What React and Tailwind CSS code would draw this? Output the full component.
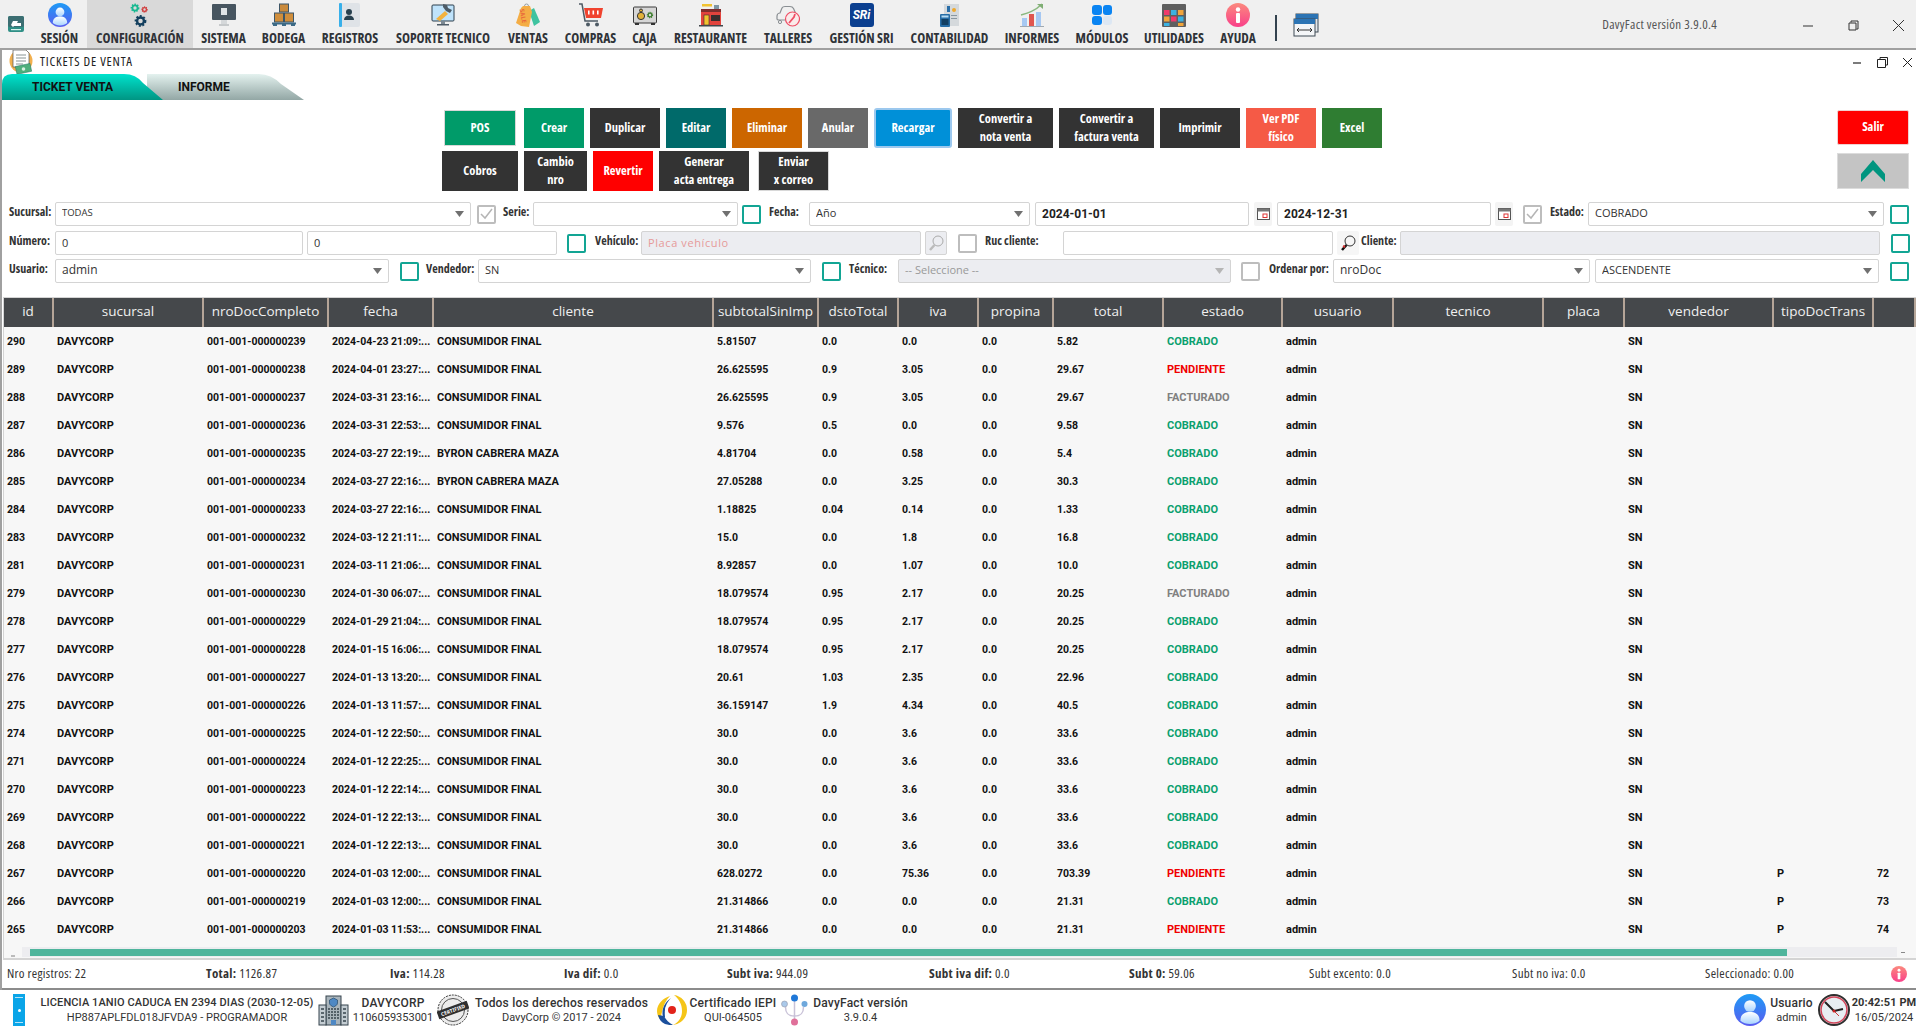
const NARROW = "font-['Open_Sans',sans-serif] [font-stretch:75%]";
const ROBOTO = "font-['Roboto',sans-serif]";

function Gear({ cx, cy, r, color }) {
  return (
    <g>
      <circle cx={cx} cy={cy} r={r} fill="none" stroke={color} strokeWidth={r * 0.45} strokeDasharray={`${r * 0.4} ${r * 0.34}`} />
      <circle cx={cx} cy={cy} r={r * 0.72} fill="none" stroke={color} strokeWidth={r * 0.5} />
    </g>
  );
}

function UserIcon({ id, size = 24 }) {
  return (
    <svg width={size} height={size} viewBox="0 0 24 24">
      <defs>
        <linearGradient id={id} x1="0" y1="0" x2="0" y2="1">
          <stop offset="0" stopColor="#1e9bf5" />
          <stop offset="1" stopColor="#5a5cf0" />
        </linearGradient>
        <linearGradient id={id + 'b'} x1="0" y1="0" x2="0" y2="1">
          <stop offset="0" stopColor="#ffffff" />
          <stop offset="1" stopColor="#a9d4ff" />
        </linearGradient>
      </defs>
      <circle cx="12" cy="12" r="12" fill={`url(#${id})`} />
      <circle cx="12" cy="9" r="4.4" fill={`url(#${id}b)`} />
      <path d="M4.8 20c0-4.600 3-6.500 7.200-6.500s7.200 1.900 7.200 6.500c-2 1.600-4.400 2.500-7.200 2.500s-5.200-.9-7.200-2.500z" fill={`url(#${id}b)`} />
    </svg>
  );
}

function InfoIcon({ id, size = 24 }) {
  return (
    <svg width={size} height={size} viewBox="0 0 24 24">
      <defs>
        <linearGradient id={id} x1="0" y1="0" x2="0" y2="1">
          <stop offset="0" stopColor="#fb8a7e" />
          <stop offset="1" stopColor="#f9408a" />
        </linearGradient>
      </defs>
      <circle cx="12" cy="12" r="12" fill={`url(#${id})`} />
      <circle cx="12" cy="6.500" r="2.200" fill="#fff" />
      <rect x="10" y="10" width="4" height="10" rx="1" fill="#fff" />
    </svg>
  );
}

const menuIcons = {
  sesion: <UserIcon id="u1" />,
  config: (
    <svg width="24" height="24" viewBox="0 0 24 24">
      <Gear cx={7} cy={5} r={3.6} color="#17b890" />
      <Gear cx={16.500} cy={6.500} r={2.600} color="#d13a3a" />
      <Gear cx={12.500} cy={18} r={4.800} color="#14405f" />
    </svg>
  ),
  sistema: (
    <svg width="24" height="24" viewBox="0 0 24 24">
      <rect x="0" y="1" width="24" height="16" rx="1" fill="#475560" />
      <rect x="9" y="5" width="6" height="7" fill="#dfe3e6" />
      <rect x="9" y="17" width="6" height="4" fill="#d5d8da" />
      <rect x="7" y="21" width="10" height="2" fill="#c6c9cb" />
    </svg>
  ),
  bodega: (
    <svg width="24" height="24" viewBox="0 0 24 24">
      <rect x="7.500" y="1" width="9" height="8" fill="#c98a3c" stroke="#3d5566" />
      <rect x="2.500" y="10" width="9" height="9" fill="#d08e3c" stroke="#3d5566" />
      <rect x="12.500" y="10" width="9" height="9" fill="#d08e3c" stroke="#3d5566" />
      <rect x="0" y="19.500" width="24" height="2" fill="#3c6a86" />
      <rect x="1" y="21" width="4" height="2" fill="#3c6a86" />
      <rect x="10" y="21" width="4" height="2" fill="#3c6a86" />
      <rect x="19" y="21" width="4" height="2" fill="#3c6a86" />
    </svg>
  ),
  registros: (
    <svg width="24" height="24" viewBox="0 0 24 24">
      <rect x="2" y="0" width="20" height="24" rx="2" fill="#dfe3e7" />
      <rect x="1" y="0" width="3" height="24" rx="1" fill="#38b0ea" />
      <circle cx="11" cy="9" r="3" fill="#27404f" />
      <path d="M6 17c0-3 2-4.500 5-4.500s5 1.500 5 4.500z" fill="#27404f" />
    </svg>
  ),
  soporte: (
    <svg width="24" height="24" viewBox="0 0 24 24">
      <rect x="1" y="2" width="22" height="16" rx="1" fill="#bfe3fb" stroke="#2d3e4c" />
      <rect x="10" y="18" width="4" height="3" fill="#7c8993" />
      <rect x="6" y="21" width="12" height="1.500" fill="#4f5d68" />
      <path d="M5 16l9-8 3 3-8 7z" fill="#f2b23e" />
      <path d="M12 1l4 1 1 3 4 2-2 3-4-2-3-4z" fill="#4d5b66" />
    </svg>
  ),
  ventas: (
    <svg width="24" height="24" viewBox="0 0 24 24">
      <circle cx="10.500" cy="3" r="2" fill="none" stroke="#9aa0a5" />
      <path d="M13 8l5-3 6 14-6 4z" fill="#3fc3a0" />
      <path d="M7 3h7l2 6-3 15-8-1-5-3 5-15z" fill="#f4ad45" />
      <text x="7" y="15" fontSize="6" fontWeight="700" fill="#e9683c" transform="rotate(80 7 13)" textAnchor="middle">SALE</text>
    </svg>
  ),
  compras: (
    <svg width="24" height="24" viewBox="0 0 24 24">
      <path d="M0 1h3l3 17h13" fill="none" stroke="#4d5a64" strokeWidth="1.500" />
      <path d="M5 5h19l-2 10H7z" fill="#f0432f" />
      <rect x="9" y="7.500" width="1.600" height="4" fill="#fff" />
      <rect x="13.500" y="7.500" width="1.600" height="4" fill="#fff" />
      <rect x="18" y="7.500" width="1.600" height="4" fill="#fff" />
      <circle cx="9" cy="21.500" r="2" fill="#4d5a64" />
      <circle cx="18" cy="21.500" r="2" fill="#4d5a64" />
    </svg>
  ),
  caja: (
    <svg width="24" height="24" viewBox="0 0 24 24">
      <rect x="0.500" y="4" width="23" height="16" rx="1" fill="#d6d6d6" stroke="#3c3c3c" />
      <rect x="2" y="20" width="4" height="2" fill="#333" />
      <rect x="18" y="20" width="4" height="2" fill="#333" />
      <circle cx="8" cy="13" r="3.600" fill="#e3b23a" stroke="#333" />
      <circle cx="8" cy="7.500" r="1.500" fill="#e3b23a" stroke="#333" />
      <Gear cx={17} cy={12} r={2.600} color="#3e7e2e" />
    </svg>
  ),
  restaurante: (
    <svg width="24" height="24" viewBox="0 0 24 24">
      <rect x="2" y="9" width="20" height="13" fill="#e2433d" />
      <rect x="2" y="6" width="20" height="3" fill="#7e2e2e" />
      <rect x="3" y="1" width="10" height="2.500" fill="#f2c230" />
      <rect x="15" y="2" width="5" height="4" fill="#7f96a3" />
      <rect x="5" y="12" width="5" height="10" fill="#f2c230" stroke="#333" strokeWidth=".6" />
      <rect x="12" y="12" width="9" height="6" fill="#3a2e2e" />
      <rect x="0" y="22" width="24" height="1.500" fill="#40474c" />
    </svg>
  ),
  talleres: (
    <svg width="24" height="24" viewBox="0 0 24 24">
      <path d="M1 13c0-2 2-3 3-3l2-5c.500-1 1-1.500 3-1.500h5c2 0 3 1 3.500 2l2 4.500" fill="none" stroke="#8a8f93" strokeWidth="1.200" />
      <path d="M1 13v3c0 1 1 1 2 1h8" fill="none" stroke="#8a8f93" strokeWidth="1.200" />
      <circle cx="4" cy="19" r="1.600" fill="none" stroke="#8a8f93" />
      <circle cx="16.500" cy="16" r="7" fill="#fbeaea" stroke="#ef4f66" strokeWidth="1.200" />
      <path d="M13 20l5-6 1-3" fill="none" stroke="#ef4f66" strokeWidth="1.800" />
    </svg>
  ),
  sri: (
    <div className={`w-[24px] h-[24px] rounded-[3px] bg-[#0b3f8f] flex items-center justify-center text-white text-[12px] font-bold italic ${ROBOTO}`}>
      SRi
    </div>
  ),
  contabilidad: (
    <svg width="24" height="24" viewBox="0 0 24 24">
      <rect x="6" y="1" width="15" height="22" fill="#d5d9dc" />
      <rect x="9" y="3" width="3" height="6" fill="#2a6ea8" />
      <circle cx="16" cy="7" r="2" fill="#efa92e" />
      <rect x="13" y="12" width="6" height="1" fill="#8a97a0" />
      <rect x="13" y="15" width="6" height="1" fill="#8a97a0" />
      <rect x="2" y="11" width="10" height="13" rx="1" fill="#276da6" />
      <rect x="3.500" y="12.500" width="7" height="2" fill="#b7dcf4" />
      <rect x="3.500" y="16" width="7" height="6" fill="#123f63" />
    </svg>
  ),
  informes: (
    <svg width="24" height="24" viewBox="0 0 24 24">
      <path d="M1 12C8 10 15 8 22 1" fill="none" stroke="#8ab87f" strokeWidth="1.500" />
      <path d="M17 1h6v5z" fill="#7fae74" />
      <rect x="2" y="15" width="5" height="8" fill="#a6c8f2" />
      <rect x="9" y="11" width="5" height="12" fill="#e0564f" />
      <rect x="16" y="9" width="5" height="14" fill="#a6c8f2" />
      <rect x="0" y="23" width="24" height="1" fill="#9fa9b2" />
    </svg>
  ),
  modulos: (
    <div className="w-[20px] h-[20px] mt-[2px] grid grid-cols-2 gap-[1px]">
      <div className="rounded-[3px] bg-[#0a84f2]" />
      <div className="rounded-[3px] bg-[#0a84f2]" />
      <div className="rounded-[3px] bg-[#0a84f2]" />
      <div className="rounded-[3px] bg-[#dce7f3]" />
    </div>
  ),
  utilidades: (
    <svg width="24" height="24" viewBox="0 0 24 24">
      <rect x="0" y="1" width="24" height="23" rx="1" fill="#5f5f5f" />
      <rect x="2" y="7" width="5.500" height="5" fill="#ef3b6b" />
      <rect x="9" y="7" width="5.500" height="5" fill="#3cb2e0" />
      <rect x="16" y="7" width="5.500" height="5" fill="#f2a53a" />
      <rect x="2" y="13.500" width="5.500" height="5" fill="#f2a53a" />
      <rect x="9" y="13.500" width="5.500" height="5" fill="#ef3b6b" />
      <rect x="16" y="13.500" width="5.500" height="5" fill="#3cb2e0" />
      <rect x="2" y="20" width="5.500" height="3" fill="#3cb2e0" />
      <rect x="16" y="20" width="5.500" height="3" fill="#f2a53a" />
    </svg>
  ),
  ayuda: <InfoIcon id="i1" />,
};

const menu = [
  { k: 'sesion', t: 'SESIÓN', w: 'w-[55px]' },
  { k: 'config', t: 'CONFIGURACIÓN', w: 'w-[106px] bg-[#d9d9d9]' },
  { k: 'sistema', t: 'SISTEMA', w: 'w-[61px]' },
  { k: 'bodega', t: 'BODEGA', w: 'w-[59px]' },
  { k: 'registros', t: 'REGISTROS', w: 'w-[74px]' },
  { k: 'soporte', t: 'SOPORTE TECNICO', w: 'w-[112px]' },
  { k: 'ventas', t: 'VENTAS', w: 'w-[58px]' },
  { k: 'compras', t: 'COMPRAS', w: 'w-[67px]' },
  { k: 'caja', t: 'CAJA', w: 'w-[41px]' },
  { k: 'restaurante', t: 'RESTAURANTE', w: 'w-[91px]' },
  { k: 'talleres', t: 'TALLERES', w: 'w-[64px]' },
  { k: 'sri', t: 'GESTIÓN SRI', w: 'w-[83px]' },
  { k: 'contabilidad', t: 'CONTABILIDAD', w: 'w-[93px]' },
  { k: 'informes', t: 'INFORMES', w: 'w-[72px]' },
  { k: 'modulos', t: 'MÓDULOS', w: 'w-[68px]' },
  { k: 'utilidades', t: 'UTILIDADES', w: 'w-[76px]' },
  { k: 'ayuda', t: 'AYUDA', w: 'w-[52px]' },
];

function TopBar() {
  return (
    <div className="h-[50px] bg-[#f0f0f0] border-b-[2px] border-[#a0a0a0] flex items-start">
      <div className="w-[32px] pl-[8px] pt-[16px]">
        <svg width="16" height="16" viewBox="0 0 16 16">
          <rect width="16" height="16" rx="2" fill="#2f8f86" />
          <rect width="16" height="11" rx="2" fill="#3c6e72" />
          <path d="M3 9l2-4h5l-1 2h4v3H6l-1 1z" fill="#fff" />
          <rect x="3" y="13" width="10" height="1.200" fill="#d8f5ee" />
        </svg>
      </div>
      {menu.map((m) => (
        <div key={m.k} className={`${m.w} h-[48px] pt-[3px] flex flex-col items-center`}>
          <div className="h-[25px] flex items-start justify-center">{menuIcons[m.k]}</div>
          <span className={`mt-[3px] text-[13.500px] leading-[15px] font-bold text-[#2f3338] whitespace-nowrap ${NARROW}`}>{m.t}</span>
        </div>
      ))}
      <div className="ml-[11px] mt-[15px] w-[2px] h-[26px] bg-[#33424f]" />
      <div className="ml-[16px] mt-[13px]">
        <svg width="26" height="24" viewBox="0 0 26 24">
          <rect x="3" y="1" width="22" height="18" fill="#e4e8ec" stroke="#3e4a54" />
          <rect x="3" y="1" width="22" height="5" fill="#2c74b4" />
          <rect x="1" y="6" width="21" height="17" fill="#f4f6f8" stroke="#3e4a54" />
          <rect x="1" y="6" width="21" height="5" fill="#2c74b4" />
          <path d="M4 17h15M4 17l2-2M4 17l2 2M19 17l-2-2M19 17l-2 2" stroke="#333" fill="none" />
        </svg>
      </div>
      <span className={`ml-auto mt-[16px] mr-[86px] text-[13px] tracking-[0.3px] leading-[16px] text-[#555] ${NARROW}`}>DavyFact versión 3.9.0.4</span>
      <div className="flex items-center mt-[20px] mr-[12px] gap-[34px]">
        <svg width="11" height="10" viewBox="0 0 11 10"><path d="M0 5h10" stroke="#333" /></svg>
        <svg width="11" height="11" viewBox="0 0 11 11"><path d="M3 2.500V1h7v8H8.500M1 3h7v7H1z" stroke="#333" fill="none" /></svg>
        <svg width="11" height="11" viewBox="0 0 11 11"><path d="M0 0l11 11M11 0L0 11" stroke="#333" /></svg>
      </div>
    </div>
  );
}

function TitleRow() {
  return (
    <div className="h-[24px] flex items-center relative">
      <div className="ml-[7px] w-[24px]">
        <svg width="24" height="24" viewBox="0 0 24 24">
          <circle cx="12" cy="11" r="11.500" fill="#f2b04e" />
          <path d="M4 0h13l3 3v14H4z" fill="#fff" stroke="#555" strokeWidth=".7" />
          <path d="M7 5h10M7 8h10M7 11h10M7 14h7" stroke="#566" strokeWidth=".7" />
          <rect x="7" y="15" width="15" height="8" transform="rotate(-12 14 19)" fill="#4faf7b" stroke="#276" strokeWidth=".5" />
          <circle cx="14.500" cy="19" r="1.800" fill="#d6f0e0" />
        </svg>
      </div>
      <span className={`ml-[7px] text-[13px] tracking-[0.8px] text-[#222] ${NARROW}`}>TICKETS DE VENTA</span>
      <div className="ml-auto mr-[4px] flex items-center gap-[15px]">
        <svg width="9" height="9" viewBox="0 0 9 9"><path d="M0 5h8" stroke="#222" strokeWidth="1.200" /></svg>
        <svg width="11" height="11" viewBox="0 0 11 11"><path d="M3 2.500V.5h7.500v7.500H8.500M.5 2.500h8v8h-8z" stroke="#222" fill="none" /></svg>
        <svg width="9" height="9" viewBox="0 0 9 9"><path d="M0 0l9 9M9 0L0 9" stroke="#222" /></svg>
      </div>
    </div>
  );
}

function Tabs() {
  return (
    <div className={`h-[26px] relative text-[12px] font-bold text-[#111] ${ROBOTO}`}>
      <div className="absolute left-[145px] top-0 w-[160px] h-[26px] bg-gradient-to-b from-[#e4f2ef] to-[#93a7a5] [clip-path:path('M0,26_L0,0_L112,0_Q124,0_134,10_L157,26_Z')] flex items-center pl-[31px]">
        INFORME
      </div>
      <div className="absolute left-[0px] top-0 w-[162px] h-[26px] bg-gradient-to-b from-[#00e3cd] to-[#009583] [clip-path:path('M0,26_L0,10_Q0,0_10,0_L122,0_Q134,0_141,9_L161,26_Z')] flex items-center pl-[30px]">
        TICKET VENTA
      </div>
    </div>
  );
}

const row1 = [
  { t: ['Crear'], c: 'w-[60px] ml-[2px] bg-[#009b69]' },
  { t: ['Duplicar'], c: 'w-[70px] bg-[#333333]' },
  { t: ['Editar'], c: 'w-[60px] bg-[#006a6a]' },
  { t: ['Eliminar'], c: 'w-[70px] bg-[#cc6600]' },
  { t: ['Anular'], c: 'w-[60px] bg-[#696969]' },
  { t: ['Recargar'], c: 'w-[78px] bg-[#0090d8] border-[2px] border-[#9cc8ee] rounded-[3px]' },
  { t: ['Convertir a', 'nota venta'], c: 'w-[95px] bg-[#333333]' },
  { t: ['Convertir a', 'factura venta'], c: 'w-[95px] bg-[#333333]' },
  { t: ['Imprimir'], c: 'w-[80px] bg-[#333333]' },
  { t: ['Ver PDF', 'físico'], c: 'w-[70px] bg-[#f55a46]' },
  { t: ['Excel'], c: 'w-[60px] bg-[#2f7d32]' },
];
const row2 = [
  { t: ['Cobros'], c: 'w-[76px] bg-[#333333]' },
  { t: ['Cambio', 'nro'], c: 'w-[63px] bg-[#333333]' },
  { t: ['Revertir'], c: 'w-[60px] bg-[#ff0000]' },
  { t: ['Generar', 'acta entrega'], c: 'w-[90px] bg-[#333333]' },
  { t: ['Enviar', 'x correo'], c: 'w-[71px] ml-[3px] bg-[#333333] border border-[#d8d8d8]' },
];

function Btn({ t, c }) {
  return (
    <div className={`${c} h-[40px] shrink-0 flex flex-col items-center justify-center text-white text-[12.500px] leading-[18px] font-bold ${NARROW}`}>
      {t.map((x) => <span key={x}>{x}</span>)}
    </div>
  );
}

function Toolbar() {
  return (
    <div className="h-[102px] pt-[8px] flex">
      <div className="ml-[440px] flex flex-col gap-[3px]">
        <div className="flex gap-[6px] items-start h-[40px]">
          <div className={`w-[72px] ml-[2px] mt-[2px] h-[36px] bg-[#009b69] border border-[#d8d8d8] flex items-center justify-center text-white text-[12.500px] font-bold ${NARROW}`}>POS</div>
          {row1.map((b) => <Btn key={b.t[0] + b.t[1]} t={b.t} c={b.c} />)}
        </div>
        <div className="flex gap-[6px]">
          {row2.map((b) => <Btn key={b.t[0]} t={b.t} c={b.c} />)}
        </div>
      </div>
      <div className="ml-[455px] mt-[2px] flex flex-col gap-[8px]">
        <div className={`w-[72px] h-[35px] bg-[#ff0000] border border-[#f0d0d0] rounded-[2px] flex items-center justify-center text-white text-[12.500px] font-bold ${NARROW}`}>Salir</div>
        <div className="w-[72px] h-[36px] bg-[#c4c4c4] border border-[#dcdcdc] flex items-center justify-center">
          <svg width="24" height="22" viewBox="0 0 24 22"><path d="M12 0l12 14v8L12 10 0 22v-8z" fill="#00957f" /></svg>
        </div>
      </div>
    </div>
  );
}

function Label({ c, children }) {
  return <span className={`${c} self-start pt-[2px] shrink-0 text-[12px] leading-[16px] font-bold text-[#333] whitespace-nowrap ${NARROW}`}>{children}</span>;
}

function Select({ c, children, text = 'text-[11px] text-[#333]', disabled }) {
  return (
    <div className={`${c} h-[24px] shrink-0 border border-[#d4d4d4] rounded-[2px] flex items-center pl-[6px] pr-[6px] ${disabled ? 'bg-[#ecedf1]' : 'bg-white'} font-['Open_Sans',sans-serif] ${text}`}>
      <span className="flex-1 whitespace-nowrap overflow-hidden pb-[2px]">{children}</span>
      <svg width="9" height="6" viewBox="0 0 9 6"><path d="M0 0h9L4.500 6z" fill={disabled ? '#b5b5b5' : '#707070'} /></svg>
    </div>
  );
}

function Input({ c, children, text = 'text-[11px] text-[#333]', disabled }) {
  return (
    <div className={`${c} h-[24px] shrink-0 border border-[#d4d4d4] rounded-[2px] flex items-center pl-[6px] ${disabled ? 'bg-[#ecedf1]' : 'bg-white'} font-['Open_Sans',sans-serif] ${text}`}>
      {children}
    </div>
  );
}

function Check({ c, teal, on }) {
  return (
    <div className={`${c} w-[19px] h-[19px] shrink-0 rounded-[2px] border-[2px] flex items-center justify-center ${teal ? 'border-[#12a594]' : 'border-[#bdbdbd]'} bg-white`}>
      {on && <svg width="13" height="12" viewBox="0 0 13 12"><path d="M1 6l4 4 7-9" stroke="#b5b5b5" strokeWidth="1.500" fill="none" /></svg>}
    </div>
  );
}

function CalBtn({ c }) {
  return (
    <div className={`${c} w-[18px] h-[24px] shrink-0 bg-[#f4f4f4] rounded-[2px] flex items-center justify-center`}>
      <svg width="13" height="12" viewBox="0 0 13 12">
        <rect x=".5" y=".5" width="12" height="11" fill="#fff" stroke="#555" />
        <rect x=".5" y=".5" width="12" height="3" fill="#777" />
        <rect x="6" y="6" width="4" height="3.500" fill="none" stroke="#d33" />
      </svg>
    </div>
  );
}

function SearchBtn({ c, red }) {
  return (
    <div className={`${c} w-[22px] h-[24px] shrink-0 rounded-[2px] flex items-center justify-center ${red ? 'bg-[#f6f6f6]' : 'bg-[#ecedf1] border border-[#d4d4d4]'}`}>
      <svg width="16" height="18" viewBox="0 0 16 18">
        <circle cx="10" cy="7" r="5" fill="none" stroke={red ? '#333' : '#aaa'} />
        <path d="M6.500 11L2 16" stroke={red ? '#111' : '#bbb'} strokeWidth="2.500" />
        {red && <path d="M5 13l-2-1" stroke="#d33" strokeWidth="2" />}
      </svg>
    </div>
  );
}

const dateText = `text-[12px] font-bold text-[#222] ${ROBOTO}`;

function Filters() {
  return (
    <div className="pl-[7px] flex flex-col gap-[5px]">
      <div className="flex items-center h-[24px]">
        <Label c="w-[46px]">Sucursal:</Label>
        <Select c="w-[416px]" text="text-[9.500px] text-[#333]">TODAS</Select>
        <Check c="ml-[6px]" on />
        <Label c="ml-[7px] w-[30px]">Serie:</Label>
        <Select c="w-[205px]" />
        <Check c="ml-[4px]" teal />
        <Label c="ml-[8px] w-[40px]">Fecha:</Label>
        <Select c="w-[221px]">Año</Select>
        <Input c="ml-[5px] w-[214px]" text={dateText}>2024-01-01</Input>
        <CalBtn c="ml-[5px]" />
        <Input c="ml-[5px] w-[214px]" text={dateText}>2024-12-31</Input>
        <CalBtn c="ml-[4px]" />
        <Check c="ml-[10px]" on />
        <Label c="ml-[8px] w-[38px]">Estado:</Label>
        <Select c="w-[296px]">COBRADO</Select>
        <Check c="ml-[6px]" teal />
      </div>
      <div className="flex items-center h-[24px]">
        <Label c="w-[46px]">Número:</Label>
        <Input c="w-[248px]">0</Input>
        <Input c="ml-[4px] w-[250px]">0</Input>
        <Check c="ml-[10px]" teal />
        <Label c="ml-[9px] w-[46px]">Vehículo:</Label>
        <Input c="w-[280px]" disabled text="text-[11px] text-[#e69a9a] tracking-[0.6px]">Placa vehículo</Input>
        <SearchBtn c="ml-[4px]" />
        <Check c="ml-[11px]" />
        <Label c="ml-[8px] w-[78px]">Ruc cliente:</Label>
        <Input c="w-[270px]" />
        <SearchBtn c="ml-[4px]" red />
        <Label c="ml-[2px] w-[39px]">Cliente:</Label>
        <Input c="w-[480px]" disabled />
        <Check c="ml-[11px]" teal />
      </div>
      <div className="flex items-center h-[24px] -mt-[1px]">
        <Label c="w-[46px]">Usuario:</Label>
        <Select c="w-[334px]" text="text-[12px] text-[#333]">admin</Select>
        <Check c="ml-[11px]" teal />
        <Label c="ml-[7px] w-[52px]">Vendedor:</Label>
        <Select c="w-[333px]">SN</Select>
        <Check c="ml-[11px]" teal />
        <Label c="ml-[8px] w-[49px]">Técnico:</Label>
        <Select c="w-[333px]" disabled text="text-[11px] text-[#999]">-- Seleccione --</Select>
        <Check c="ml-[10px]" />
        <Label c="ml-[9px] w-[64px]">Ordenar por:</Label>
        <Select c="w-[257px]" text="text-[12px] text-[#333]">nroDoc</Select>
        <Select c="ml-[5px] w-[284px]">ASCENDENTE</Select>
        <Check c="ml-[11px]" teal />
      </div>
    </div>
  );
}

const COLS = 'grid grid-cols-[50px_150px_125px_105px_280px_105px_80px_80px_75px_110px_119px_111px_150px_81px_149px_100px_42px]';
const headers = ['id', 'sucursal', 'nroDocCompleto', 'fecha', 'cliente', 'subtotalSinImp', 'dstoTotal', 'iva', 'propina', 'total', 'estado', 'usuario', 'tecnico', 'placa', 'vendedor', 'tipoDocTrans', ''];

const CF = 'CONSUMIDOR FINAL';
const BY = 'BYRON CABRERA MAZA';
const rows = [
  ['290', '239', '2024-04-23 21:09', CF, '5.81507', '0.0', '0.0', '5.82', 'COBRADO'],
  ['289', '238', '2024-04-01 23:27', CF, '26.625595', '0.9', '3.05', '29.67', 'PENDIENTE'],
  ['288', '237', '2024-03-31 23:16', CF, '26.625595', '0.9', '3.05', '29.67', 'FACTURADO'],
  ['287', '236', '2024-03-31 22:53', CF, '9.576', '0.5', '0.0', '9.58', 'COBRADO'],
  ['286', '235', '2024-03-27 22:19', BY, '4.81704', '0.0', '0.58', '5.4', 'COBRADO'],
  ['285', '234', '2024-03-27 22:16', BY, '27.05288', '0.0', '3.25', '30.3', 'COBRADO'],
  ['284', '233', '2024-03-27 22:16', CF, '1.18825', '0.04', '0.14', '1.33', 'COBRADO'],
  ['283', '232', '2024-03-12 21:11', CF, '15.0', '0.0', '1.8', '16.8', 'COBRADO'],
  ['281', '231', '2024-03-11 21:06', CF, '8.92857', '0.0', '1.07', '10.0', 'COBRADO'],
  ['279', '230', '2024-01-30 06:07', CF, '18.079574', '0.95', '2.17', '20.25', 'FACTURADO'],
  ['278', '229', '2024-01-29 21:04', CF, '18.079574', '0.95', '2.17', '20.25', 'COBRADO'],
  ['277', '228', '2024-01-15 16:06', CF, '18.079574', '0.95', '2.17', '20.25', 'COBRADO'],
  ['276', '227', '2024-01-13 13:20', CF, '20.61', '1.03', '2.35', '22.96', 'COBRADO'],
  ['275', '226', '2024-01-13 11:57', CF, '36.159147', '1.9', '4.34', '40.5', 'COBRADO'],
  ['274', '225', '2024-01-12 22:50', CF, '30.0', '0.0', '3.6', '33.6', 'COBRADO'],
  ['271', '224', '2024-01-12 22:25', CF, '30.0', '0.0', '3.6', '33.6', 'COBRADO'],
  ['270', '223', '2024-01-12 22:14', CF, '30.0', '0.0', '3.6', '33.6', 'COBRADO'],
  ['269', '222', '2024-01-12 22:13', CF, '30.0', '0.0', '3.6', '33.6', 'COBRADO'],
  ['268', '221', '2024-01-12 22:13', CF, '30.0', '0.0', '3.6', '33.6', 'COBRADO'],
  ['267', '220', '2024-01-03 12:00', CF, '628.0272', '0.0', '75.36', '703.39', 'PENDIENTE', 'P', '72'],
  ['266', '219', '2024-01-03 12:00', CF, '21.314866', '0.0', '0.0', '21.31', 'COBRADO', 'P', '73'],
  ['265', '203', '2024-01-03 11:53', CF, '21.314866', '0.0', '0.0', '21.31', 'PENDIENTE', 'P', '74'],
];

const estadoColor = { COBRADO: 'text-[#0aa06e]', PENDIENTE: 'text-[#f00000]', FACTURADO: 'text-[#808080]' };
const numeric = [0, 2, 3, 5, 6, 7, 8, 9, 16];

function Row({ r }) {
  const [id, doc, fecha, cliente, sub, dsto, iva, total, estado, tipo, last] = r;
  const cells = [id, 'DAVYCORP', `001-001-000000${doc}`, `${fecha}:...`, cliente, sub, dsto, iva, '0.0', total, estado, 'admin', '', '', 'SN', tipo || '', last || ''];
  return (
    <div className={`${COLS} h-[28px] items-center text-[11px] font-bold text-[#111] ${ROBOTO}`}>
      {cells.map((c, i) => (
        <div key={i} className={`pl-[3px] whitespace-nowrap overflow-hidden ${numeric.includes(i) ? 'text-[10.500px]' : ''} ${i === 10 ? estadoColor[estado] : ''}`}>{c}</div>
      ))}
    </div>
  );
}

function Table() {
  return (
    <div className="mt-[14px] ml-[1px] w-[1913px] h-[663px] border-l border-t border-b-[2px] border-[#d4d4d4] bg-[#f7f7f7] flex flex-col">
      <div className={`${COLS} h-[29px] bg-[#45484b] shrink-0`}>
        {headers.map((h, i) => (
          <div key={i} className="border-r-[2px] border-[#b5a598] flex items-center justify-center pb-[2px] text-[13.500px] font-medium text-[#f0f0f0] font-['Open_Sans',sans-serif] whitespace-nowrap overflow-hidden">{h}</div>
        ))}
      </div>
      <div className="pt-[1px]">
        {rows.map((r) => <Row key={r[0]} r={r} />)}
      </div>
      <div className="mt-[3px] h-[10px] flex items-center">
        <div className="w-[18px] h-[10px] flex items-end justify-center"><div className="w-[4px] h-[2px] bg-[#bbbbbb]" /></div>
        <div className="w-[1875px] h-[10px] bg-[#ededf0] pl-[8px] flex items-center">
          <div className="w-[1757px] h-[7px] bg-[#4fb59c]" />
        </div>
        <div className="w-[12px] h-[10px] flex items-center justify-center"><div className="w-[4px] h-[1px] bg-[#888888]" /></div>
      </div>
    </div>
  );
}

const totals = [
  ['w-[199px]', 'Nro registros:', '22', false],
  ['w-[184px]', 'Total:', '1126.87', true],
  ['w-[174px]', 'Iva:', '114.28', true],
  ['w-[163px]', 'Iva dif:', '0.0', true],
  ['w-[202px]', 'Subt iva:', '944.09', true],
  ['w-[200px]', 'Subt iva dif:', '0.0', true],
  ['w-[180px]', 'Subt 0:', '59.06', true],
  ['w-[203px]', 'Subt excento:', '0.0', false],
  ['w-[193px]', 'Subt no iva:', '0.0', false],
  ['w-[186px]', 'Seleccionado:', '0.00', false],
];

function Totals() {
  return (
    <div className="h-[28px] pl-[5px] flex items-center border-b-[2px] border-[#8c8c8c] box-content">
      {totals.map(([w, a, b, strong]) => (
        <div key={a} className={`${w} shrink-0 text-[13px] tracking-[0.3px] text-[#333] whitespace-nowrap ${NARROW}`}>
          <span className={strong ? 'font-bold' : ''}>{a}</span> {b}
        </div>
      ))}
      <InfoIcon id="i2" size={16} />
    </div>
  );
}

function Pair({ c, a, b, strong, small }) {
  return (
    <div className={`${c} shrink-0 flex flex-col items-center whitespace-nowrap text-[#333] ${ROBOTO}`}>
      <span className={`${small ? 'text-[11px] tracking-[0.1px]' : 'text-[12px] tracking-[0.2px]'} leading-[14px] ${strong ? 'font-bold' : 'font-medium'}`}>{a}</span>
      <span className="text-[11px] leading-[14px] mt-[1px]">{b}</span>
    </div>
  );
}

function Footer() {
  return (
    <div className="h-[37px] flex items-center pl-[13px] pt-[3px]">
      <div className="w-[12px] h-[32px] bg-[#0aa5e8] shrink-0 flex flex-col items-center justify-between py-[3px]">
        <div className="w-[8px] h-[1px] bg-white/70" />
        <div className="w-[3px] h-[3px] rounded-full bg-white" />
        <div className="w-[8px] h-[1px] bg-white/70" />
      </div>
      <Pair c="ml-[17px] w-[270px]" small a="LICENCIA 1ANIO CADUCA EN 2394 DIAS (2030-12-05)" b="HP887APLFDL018JFVDA9 - PROGRAMADOR" />
      <div className="ml-[6px] shrink-0">
        <svg width="31" height="31" viewBox="0 0 31 31">
          <rect x="8" y="1" width="15" height="29" fill="#a9b4bb" stroke="#37444e" />
          <rect x="1" y="10" width="7" height="20" fill="#c3ccd2" stroke="#37444e" />
          <rect x="23" y="10" width="7" height="20" fill="#c3ccd2" stroke="#37444e" />
          <path d="M15.500 3l4 2v3c0 2-2 3-4 4-2-1-4-2-4-4V5z" fill="#4e88c4" stroke="#274a6a" strokeWidth=".7" />
          <path d="M10 14h11M10 17h11M10 20h11M10 23h11" stroke="#37444e" strokeWidth="1.500" strokeDasharray="2 1" />
          <path d="M3 14h3M3 18h3M3 22h3M3 26h3M25 14h3M25 18h3M25 22h3M25 26h3" stroke="#37444e" strokeWidth="1.500" />
          <rect x="13" y="25" width="5" height="5" fill="#4e88c4" />
        </svg>
      </div>
      <Pair c="ml-[4px] w-[80px]" a="DAVYCORP" b="1106059353001" />
      <div className="ml-[4px] shrink-0">
        <svg width="32" height="32" viewBox="0 0 32 32">
          <circle cx="16" cy="16" r="15" fill="#ececec" stroke="#333" strokeDasharray="2 1" />
          <circle cx="16" cy="16" r="11.500" fill="none" stroke="#555" />
          <rect x="0" y="12" width="32" height="8" transform="rotate(-20 16 16)" fill="#2f2f2f" />
          <text x="16" y="18" fontSize="5" fontWeight="700" fill="#fff" textAnchor="middle" transform="rotate(-20 16 16)">CERTIFIED</text>
        </svg>
      </div>
      <Pair c="ml-[4px] w-[177px]" a="Todos los derechos reservados" b="DavyCorp © 2017 - 2024" />
      <div className="ml-[7px] shrink-0">
        <svg width="30" height="31" viewBox="0 0 30 31">
          <path d="M17 0a15 15 0 0 1 13 15c0 8-6 14-14 15 5-2 9-7 9-14 0-7-3-12-8-16z" fill="#f5c518" />
          <path d="M13 1C6 3 0 9 0 16c0 4 2 8 5 10 -1-3-1-6 0-9 1-6 4-12 8-16z" fill="#f5c518" />
          <path d="M1 20c1 4 3 7 7 9 3 1 6 1 8 1-4-2-7-5-9-9z" fill="#1b4f9c" />
          <path d="M6 22c-2-8 2-15 8-19-5 5-7 11-6 19z" fill="#1b4f9c" />
          <circle cx="15" cy="15" r="7" fill="#fff" />
          <circle cx="15" cy="15" r="4" fill="#e2231a" />
        </svg>
      </div>
      <Pair c="ml-[5px] w-[82px]" a="Certificado IEPI" b="QUI-064505" />
      <div className="ml-[7px] shrink-0">
        <svg width="27" height="32" viewBox="0 0 27 32">
          <path d="M13.500 4v22M13.500 22c-7 0-9-3-9-9M13.500 22c7 0 9-3 9-9" stroke="#c9c2d8" strokeWidth="1.500" fill="none" />
          <circle cx="13.500" cy="4" r="3.500" fill="#1f78d8" />
          <circle cx="3.500" cy="10" r="3" fill="#aac9ea" stroke="#889" strokeWidth=".5" />
          <circle cx="23.500" cy="10" r="3" fill="#6fa8dc" />
          <circle cx="13.500" cy="28" r="3.500" fill="#e0709a" />
        </svg>
      </div>
      <Pair c="ml-[7px] w-[91px]" a="DavyFact versión" b="3.9.0.4" />
      <div className="ml-[828px] shrink-0"><UserIcon id="u2" size={32} /></div>
      <Pair c="ml-[5px] w-[41px]" a="Usuario" b="admin" />
      <div className="ml-[6px] shrink-0">
        <svg width="32" height="32" viewBox="0 0 32 32">
          <circle cx="16" cy="16" r="15" fill="#e8eef2" stroke="#2e2e2e" strokeWidth="2" />
          <circle cx="16" cy="16" r="13" fill="none" stroke="#d1455a" strokeWidth="1.500" />
          <path d="M16 17L7 8M16 17l9-2" stroke="#222" strokeWidth="2" />
          <path d="M16 17l5 5" stroke="#d13a3a" />
          <circle cx="16" cy="17" r="1.500" fill="#c22" />
        </svg>
      </div>
      <Pair c="ml-[3px] w-[62px]" small a="20:42:51 PM" b="16/05/2024" strong />
    </div>
  );
}

export default function App() {
  return (
    <div className="w-[1916px] h-[1027px] bg-white overflow-hidden relative">
      <TopBar />
      <div className="h-[940px] border-l-[2px] border-[#a0a0a0]">
        <TitleRow />
        <Tabs />
        <Toolbar />
        <Filters />
        <Table />
        <Totals />
      </div>
      <Footer />
    </div>
  );
}
